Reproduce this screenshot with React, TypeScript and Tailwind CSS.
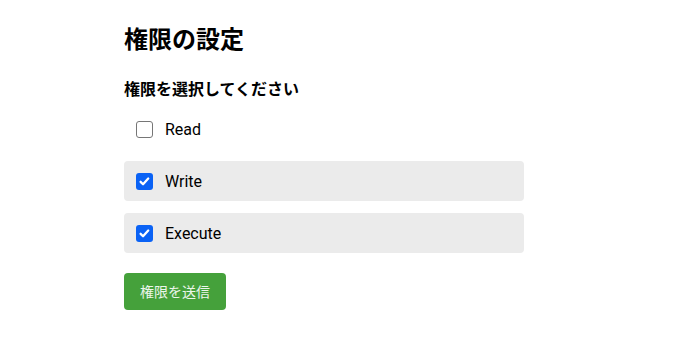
import React, { useState } from 'react';

const permissions = [
  { id: 'read', label: 'Read' },
  { id: 'write', label: 'Write' },
  { id: 'execute', label: 'Execute' },
];

const Check = ({ checked }: { checked: boolean }) => (
  <span
    className={`flex h-[17px] w-[17px] shrink-0 items-center justify-center rounded-[3px] ${
      checked ? 'bg-[#0a62f5]' : 'border border-[#767676] bg-white'
    }`}
  >
    {checked && (
      <svg viewBox="0 0 16 16" className="h-[13px] w-[13px]" fill="none">
        <path d="M3.2 8.4l3 3 6.4-7" stroke="white" strokeWidth="2.8" strokeLinecap="round" strokeLinejoin="round" />
      </svg>
    )}
  </span>
);

const App = () => {
  const [selected, setSelected] = useState<string[]>(['write', 'execute']);

  const toggle = (id: string) =>
    setSelected((prev) => (prev.includes(id) ? prev.filter((p) => p !== id) : [...prev, id]));

  return (
    <div
      className="min-h-screen bg-white pl-[124px] pt-[24px] text-black"
      style={{ fontFamily: 'Roboto, "Noto Sans CJK JP", sans-serif' }}
    >
      <div className="w-[400px]">
        <h2 className="text-2xl font-bold leading-8">権限の設定</h2>
        <p className="mt-[22px] text-base font-bold leading-6">権限を選択してください</p>

        <div className="mt-[7px] flex flex-col gap-3">
          {permissions.map((perm) => {
            const checked = selected.includes(perm.id);
            return (
              <label
                key={perm.id}
                onClick={() => toggle(perm.id)}
                className={`flex h-10 cursor-pointer items-center gap-3 rounded px-3 ${
                  checked ? 'bg-[#ebebeb]' : ''
                }`}
              >
                <Check checked={checked} />
                <span className="pt-[2px] text-base">{perm.label}</span>
              </label>
            );
          })}
        </div>

        <button className="mt-5 flex h-[37px] w-[102px] items-center justify-center rounded bg-[#45a13b] text-sm text-white/90">
          権限を送信
        </button>
      </div>
    </div>
  );
};

export default App;
